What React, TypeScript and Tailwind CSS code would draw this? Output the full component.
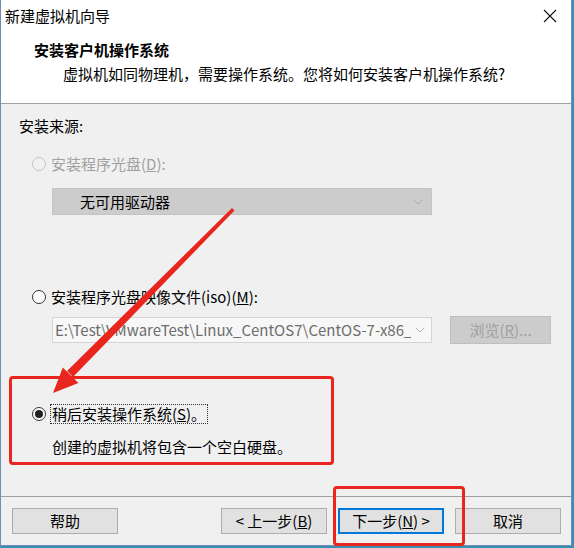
import React from 'react';

const font = "font-['Microsoft_YaHei','Noto_Sans_CJK_SC',sans-serif]";

const Radio: React.FC<{ checked?: boolean; disabled?: boolean }> = ({ checked, disabled }) => (
  <span
    className={
      'w-[14px] h-[14px] rounded-full border flex items-center justify-center shrink-0 ' +
      (disabled ? 'border-[#c4c4c4] bg-[#f0f0f0]' : 'border-[#333333] bg-white')
    }
  >
    {checked && <span className="w-[8px] h-[8px] rounded-full bg-[#222222]" />}
  </span>
);

const Btn: React.FC<{ children: React.ReactNode; primary?: boolean }> = ({ children, primary }) => (
  <button
    type="button"
    className={
      'w-[106px] h-[26px] bg-[#e1e1e1] text-[15px] leading-[20px] text-black flex items-center justify-center ' +
      (primary ? 'border-2 border-[#0078d7]' : 'border border-[#adadad]')
    }
  >
    <span>{children}</span>
  </button>
);

export default function App() {
  return (
    <div className={'relative w-[574px] h-[548px] bg-[#3a8fb0] overflow-hidden text-[15px] text-black ' + font}>
      <div className="w-[572px] h-[546px] bg-[#f0f0f0] border border-t-0 border-[#6b8fb8] flex flex-col">
        {/* header */}
        <div className="h-[104px] bg-white border-b border-[#a0a0a0] shrink-0">
          <div className="flex items-start justify-between pt-[6px] pl-[4px] pr-[14px]">
            <span className="leading-[20px]">新建虚拟机向导</span>
            <svg width="14" height="14" viewBox="0 0 14 14" className="mt-[3px]">
              <path d="M1 1 L13 13 M13 1 L1 13" stroke="#111" strokeWidth="1.1" />
            </svg>
          </div>
          <div className="pl-[33px] mt-[14px] leading-[20px] font-bold">安装客户机操作系统</div>
          <div className="pl-[62px] mt-[4px] leading-[20px]">
            虚拟机如同物理机，需要操作系统。您将如何安装客户机操作系统?
          </div>
        </div>

        {/* body */}
        <div className="flex-1 flex flex-col pl-[18px] pt-[12px]">
          <div className="leading-[20px]">安装来源:</div>

          <div className="flex items-center gap-[5px] mt-[18px] pl-[13px] leading-[20px] text-[#a0a0a0]">
            <Radio disabled />
            <span>
              安装程序光盘(<span className="underline">D</span>):
            </span>
          </div>
          <div className="ml-[33px] mt-[14px] w-[380px] h-[27px] bg-[#cccccc] border border-[#c4c4c4] flex items-center justify-between pl-[27px] pr-[8px]">
            <span className="leading-[20px]">无可用驱动器</span>
            <svg width="10" height="6" viewBox="0 0 10 6">
              <path d="M1 1 L5 5 L9 1" fill="none" stroke="#a8a8a8" strokeWidth="1" />
            </svg>
          </div>

          <div className="flex items-center gap-[5px] mt-[72px] pl-[13px] leading-[20px]">
            <Radio />
            <span>
              安装程序光盘映像文件(iso)(<span className="underline">M</span>):
            </span>
          </div>
          <div className="flex items-center mt-[9px] ml-[33px]">
            <div className="w-[380px] h-[26px] bg-[#f7f7f7] border border-[#d4d4d4] flex items-center pl-[2px] pr-[6px] gap-[4px]">
              <span className="flex-1 overflow-hidden whitespace-nowrap leading-[20px] text-[#6d6d6d]">
                {'E:\\Test\\VMwareTest\\Linux_CentOS7\\CentOS-7-x86_64-DVD-1810.iso'}
              </span>
              <svg width="10" height="6" viewBox="0 0 10 6" className="shrink-0">
                <path d="M1 1 L5 5 L9 1" fill="none" stroke="#b4b4b4" strokeWidth="1" />
              </svg>
            </div>
            <div className="ml-[18px] w-[101px] h-[28px] bg-[#cccccc] border border-[#bfbfbf] flex items-center justify-center text-[#a0a0a0] leading-[20px]">
              <span>
                浏览(<span className="underline">R</span>)...
              </span>
            </div>
          </div>

          <div className="flex items-center gap-[4px] mt-[60px] pl-[13px]">
            <Radio checked />
            <span className="leading-[18px] border border-dotted border-[#333] px-[1px]">
              稍后安装操作系统(<span className="underline">S</span>)。
            </span>
          </div>
          <div className="mt-[13px] pl-[33px] leading-[20px]">创建的虚拟机将包含一个空白硬盘。</div>
        </div>

        {/* footer */}
        <div className="h-[49px] border-t border-[#a0a0a0] shrink-0 flex items-start pt-[11px] pl-[11px] pr-[10px]">
          <Btn>帮助</Btn>
          <div className="flex-1" />
          <div className="flex gap-[11px]">
            <Btn>
              &lt; 上一步(<span className="underline">B</span>)
            </Btn>
            <Btn primary>
              下一步(<span className="underline">N</span>) &gt;
            </Btn>
            <Btn>取消</Btn>
          </div>
        </div>
      </div>

      {/* annotations */}
      <div className="absolute left-[9px] top-[376px] w-[325px] h-[89px] border-[3px] border-[#e8261e] rounded-[4px] pointer-events-none" />
      <div className="absolute left-[333px] top-[486px] w-[132px] h-[60px] border-[3px] border-[#e8261e] rounded-[4px] pointer-events-none" />
      <svg className="absolute left-0 top-0 pointer-events-none" width="574" height="548" viewBox="0 0 574 548">
        <polygon points="232,208 234.5,210.5 73,377 67,371" fill="#e8261e" />
        <polygon points="53,393 62.8,367.5 78.4,382.9" fill="#e8261e" />
      </svg>
    </div>
  );
}
